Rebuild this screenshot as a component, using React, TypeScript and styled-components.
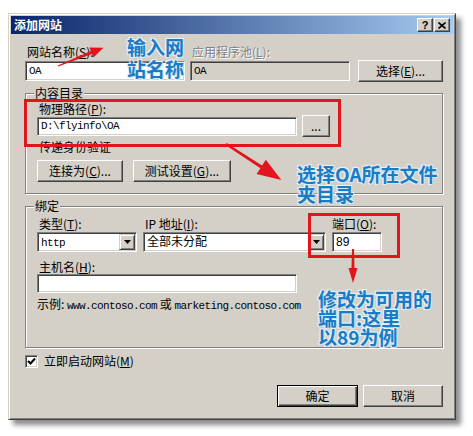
import styled, { createGlobalStyle, css } from 'styled-components'

const GlobalStyle = createGlobalStyle`
  html, body {
    margin: 0;
    padding: 0;
    background: #fff;
  }
  body {
    font-family: "Noto Sans CJK SC", "Liberation Sans", sans-serif;
  }
`

const Page = styled.div`
  position: relative;
  width: 473px;
  height: 436px;
  box-sizing: border-box;
  padding: 13px 0 0 8px;
  overflow: hidden;
  background: #fff;
`

const Dialog = styled.div`
  width: 448px;
  height: 407px;
  box-sizing: border-box;
  display: flex;
  flex-direction: column;
  padding: 2px;
  background: #d4d0c8;
  border: 1px solid;
  border-color: #d4d0c8 #404040 #404040 #d4d0c8;
  box-shadow: inset 1px 1px #fff, inset -1px -1px #808080, 5px 5px 5px rgba(0, 0, 0, 0.45);
  font-size: 12px;
  line-height: 14px;
  color: #000;
`

const TitleBar = styled.div`
  height: 18px;
  display: flex;
  align-items: center;
  justify-content: space-between;
  padding: 0 3px 0 3px;
  background: linear-gradient(to right, #0a246a, #a6caf0);
`

const Title = styled.span`
  color: #fff;
  font-weight: 700;
  font-size: 12px;
`

const TitleButtons = styled.div`
  display: flex;
  gap: 1px;
`

const TitleButton = styled.div`
  width: 16px;
  height: 14px;
  box-sizing: border-box;
  display: flex;
  align-items: center;
  justify-content: center;
  background: #d4d0c8;
  border: 1px solid;
  border-color: #fff #404040 #404040 #fff;
  box-shadow: inset -1px -1px #808080;
  font: bold 11px/11px "Liberation Sans", sans-serif;
`

const Body = styled.div`
  flex: 1;
  display: flex;
  flex-direction: column;
  padding: 11px 10px 0 14px;
`

const TopGrid = styled.div`
  display: grid;
  grid-template-columns: 160px 160px 88px;
  column-gap: 5px;
  row-gap: 1px;
  align-items: center;
`

const Label = styled.div<{ $disabled?: boolean; $shift?: number }>`
  padding-left: 2px;
  margin-left: ${(p) => p.$shift ?? 0}px;
  white-space: nowrap;
  ${(p) =>
    p.$disabled &&
    css`
      color: #808080;
      text-shadow: 1px 1px #fff;
    `}
`

const Key = styled.span`
  text-decoration: underline;
`

const Field = styled.div<{ $width?: number; $height?: number; $disabled?: boolean }>`
  width: ${(p) => (p.$width ? `${p.$width}px` : 'auto')};
  height: ${(p) => p.$height ?? 20}px;
  box-sizing: border-box;
  display: flex;
  align-items: center;
  padding: 0 1px 0 3px;
  overflow: hidden;
  white-space: nowrap;
  background: ${(p) => (p.$disabled ? '#d4d0c8' : '#fff')};
  border: 1px solid;
  border-color: #808080 #fff #fff #808080;
  box-shadow: inset 1px 1px #404040, inset -1px -1px #d4d0c8;
`

const Mono = styled.span`
  font: 11px/14px "Liberation Mono", monospace;
  letter-spacing: -0.6px;
`

const PlainValue = styled.span`
  flex: 1;
  font: 12px/14px "Liberation Sans", "Noto Sans CJK SC", sans-serif;
`

const DropButton = styled.span`
  width: 16px;
  height: 16px;
  box-sizing: border-box;
  display: flex;
  align-items: center;
  justify-content: center;
  flex: none;
  background: #d4d0c8;
  border: 1px solid;
  border-color: #d4d0c8 #404040 #404040 #d4d0c8;
  box-shadow: inset 1px 1px #fff, inset -1px -1px #808080;
`

const Button = styled.button<{ $width: number; $default?: boolean }>`
  width: ${(p) => p.$width}px;
  height: 22px;
  box-sizing: border-box;
  padding: 0;
  font: 12px/14px "Noto Sans CJK SC", sans-serif;
  color: #000;
  background: #d4d0c8;
  border: 1px solid;
  border-color: #fff #404040 #404040 #fff;
  box-shadow: inset -1px -1px #808080;
  white-space: nowrap;
  ${(p) =>
    p.$default &&
    css`
      border: 1px solid #000;
      box-shadow: inset 1px 1px #fff, inset -1px -1px #404040, inset -2px -2px #808080;
    `}
`

const SelectButton = styled(Button)`
  justify-self: end;
`

const Group = styled.fieldset<{ $top: number; $bottom: number }>`
  margin: ${(p) => p.$top}px 0 0 0;
  min-width: 0;
  padding: 0 10px ${(p) => p.$bottom}px 11px;
  border: 1px solid #808080;
  box-shadow: inset 1px 1px #fff, 1px 1px #fff;
`

const Legend = styled.legend`
  margin-left: -3px;
  padding: 0 1px;
  line-height: 14px;
  background: #d4d0c8;
`

const GroupLabel = styled(Label)<{ $top: number }>`
  margin-top: ${(p) => p.$top}px;
`

const Row = styled.div<{ $top?: number; $gap: number }>`
  display: flex;
  align-items: center;
  gap: ${(p) => p.$gap}px;
  margin-top: ${(p) => p.$top ?? 0}px;
`

const BindGrid = styled.div`
  display: grid;
  grid-template-columns: 100px 183px 50px;
  column-gap: 6px;
  row-gap: 1px;
  margin-top: 4px;
`

const Example = styled.div`
  margin-top: 4px;
  white-space: nowrap;
`

const CheckRow = styled.div`
  display: flex;
  align-items: center;
  gap: 6px;
  margin-top: 6px;
`

const CheckBox = styled.span`
  width: 13px;
  height: 13px;
  box-sizing: border-box;
  display: flex;
  align-items: center;
  justify-content: center;
  background: #fff;
  border: 1px solid;
  border-color: #808080 #fff #fff #808080;
  box-shadow: inset 1px 1px #404040, inset -1px -1px #d4d0c8;
`

const Footer = styled.div`
  display: flex;
  justify-content: flex-end;
  gap: 5px;
  margin-top: 17px;
`

const Overlay = styled.svg`
  position: absolute;
  left: 0;
  top: 0;
  pointer-events: none;
`

const Marker = styled.div<{ $x: number; $y: number; $w: number; $h: number }>`
  position: absolute;
  left: ${(p) => p.$x}px;
  top: ${(p) => p.$y}px;
  width: ${(p) => p.$w}px;
  height: ${(p) => p.$h}px;
  box-sizing: border-box;
  border: 3px solid #e3141c;
`

const Note = styled.div<{ $x: number; $y: number; $lh: number }>`
  position: absolute;
  left: ${(p) => p.$x}px;
  top: ${(p) => p.$y}px;
  font: 700 19px/${(p) => p.$lh}px "Noto Sans CJK SC", sans-serif;
  color: #1b7bc3;
  white-space: nowrap;
  text-shadow: 1px 1px 0 #cfe6f7, -1px -1px 0 #e8f3fb, 1px -1px 0 #e8f3fb, -1px 1px 0 #e8f3fb;
`

const RED = '#e3141c'

const Arrow = ({ x, y, angle, len, head, width, tail }: { x: number; y: number; angle: number; len: number; head: number; width: number; tail: number }) => (
  <g transform={`translate(${x} ${y}) rotate(${angle})`}>
    <polygon
      fill={RED}
      points={`0,${-tail} ${len - head},${-1.5} ${len - head},${-width / 2} ${len},0 ${len - head},${width / 2} ${len - head},1.5 0,${tail}`}
    />
  </g>
)

const App = () => {
  return (
    <Page>
      <GlobalStyle />
      <Dialog>
        <TitleBar>
          <Title>添加网站</Title>
          <TitleButtons>
            <TitleButton>?</TitleButton>
            <TitleButton>
              <svg width="8" height="7" viewBox="0 0 8 7">
                <path d="M0.5 0.5 L7.5 6.5 M7.5 0.5 L0.5 6.5" stroke="#000" strokeWidth="1.6" />
              </svg>
            </TitleButton>
          </TitleButtons>
        </TitleBar>

        <Body>
          <TopGrid>
            <Label>
              网站名称(<Key>S</Key>):
            </Label>
            <Label $disabled>
              应用程序池(<Key>L</Key>):
            </Label>
            <span />
            <Field>
              <Mono>OA</Mono>
            </Field>
            <Field $disabled>
              <Mono>OA</Mono>
            </Field>
            <SelectButton $width={85}>
              选择(<Key>E</Key>)...
            </SelectButton>
          </TopGrid>

          <Group $top={4} $bottom={11}>
            <Legend>内容目录</Legend>
            <GroupLabel $top={2}>
              物理路径(<Key>P</Key>):
            </GroupLabel>
            <Row $top={-1} $gap={5}>
              <Field $width={260} $height={19}>
                <Mono>D:\flyinfo\OA</Mono>
              </Field>
              <Button $width={28}>...</Button>
            </Row>
            <GroupLabel $top={3}>传递身份验证</GroupLabel>
            <Row $top={6} $gap={10}>
              <Button $width={86}>
                连接为(<Key>C</Key>)...
              </Button>
              <Button $width={98}>
                测试设置(<Key>G</Key>)...
              </Button>
            </Row>
          </Group>

          <Group $top={5} $bottom={34}>
            <Legend>绑定</Legend>
            <BindGrid>
              <Label>
                类型(<Key>T</Key>):
              </Label>
              <Label>
                IP 地址(<Key>I</Key>):
              </Label>
              <Label $shift={-2}>
                端口(<Key>O</Key>):
              </Label>
              <Field>
                <PlainValue>
                  <Mono>http</Mono>
                </PlainValue>
                <DropButton>
                  <svg width="7" height="4" viewBox="0 0 7 4">
                    <polygon points="0,0 7,0 3.5,4" fill="#000" />
                  </svg>
                </DropButton>
              </Field>
              <Field>
                <PlainValue>全部未分配</PlainValue>
                <DropButton>
                  <svg width="7" height="4" viewBox="0 0 7 4">
                    <polygon points="0,0 7,0 3.5,4" fill="#000" />
                  </svg>
                </DropButton>
              </Field>
              <Field>
                <PlainValue>89</PlainValue>
              </Field>
            </BindGrid>
            <GroupLabel $top={8}>
              主机名(<Key>H</Key>):
            </GroupLabel>
            <Field $width={260} $height={19} />
            <Example>
              示例: <Mono>www.contoso.com</Mono> 或 <Mono>marketing.contoso.com</Mono>
            </Example>
          </Group>

          <CheckRow>
            <CheckBox>
              <svg width="9" height="9" viewBox="0 0 9 9">
                <path d="M1 4 L3.5 6.5 L8 1.5" stroke="#000" strokeWidth="2" fill="none" />
              </svg>
            </CheckBox>
            <span>
              立即启动网站(<Key>M</Key>)
            </span>
          </CheckRow>

          <Footer>
            <Button $width={81} $default>
              确定
            </Button>
            <Button $width={80}>取消</Button>
          </Footer>
        </Body>
      </Dialog>

      <Marker $x={24} $y={99} $w={317} $h={48} />
      <Marker $x={308} $y={213} $w={92} $h={45} />

      <Overlay width="473" height="436" viewBox="0 0 473 436">
        <Arrow x={58} y={66} angle={-22} len={49} head={13} width={11} tail={0.6} />
        <Arrow x={226} y={144} angle={33} len={66} head={24} width={17} tail={1.2} />
        <Arrow x={353} y={249} angle={90} len={34} head={15} width={9} tail={1} />
      </Overlay>

      <Note $x={127} $y={36} $lh={22}>
        输入网
        <br />
        站名称
      </Note>
      <Note $x={297} $y={164} $lh={20}>
        选择OA所在文件
        <br />
        夹目录
      </Note>
      <Note $x={318} $y={289} $lh={19}>
        修改为可用的
        <br />
        端口:这里
        <br />
        以89为例
      </Note>
    </Page>
  )
}

export default App
